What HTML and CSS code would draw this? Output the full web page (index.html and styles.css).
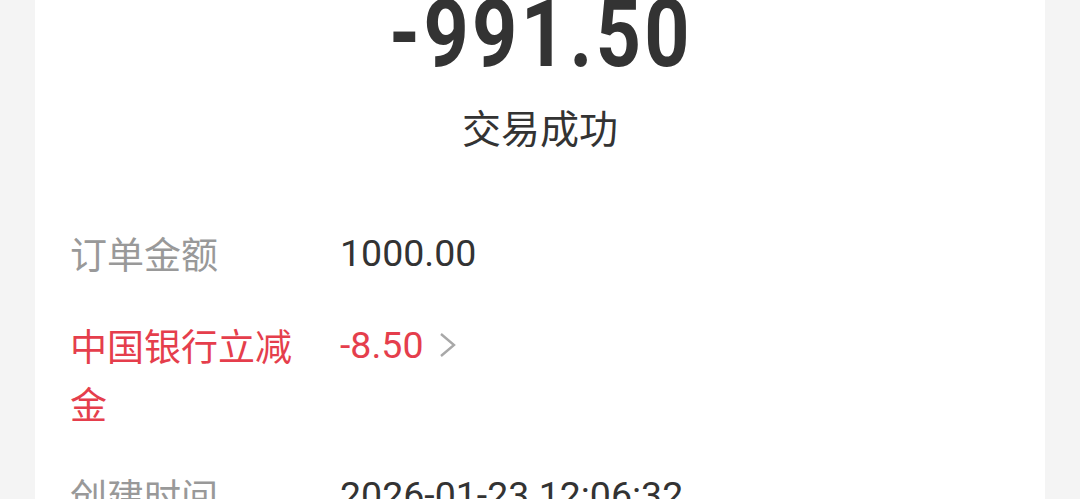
FILE: index.html
```html
<!DOCTYPE html>
<html lang="zh-CN">
<head>
    <meta charset="UTF-8">
    <meta name="viewport" content="width=device-width, initial-scale=1.0">
    <title>交易详情</title>
    <link rel="stylesheet" href="styles.css">
</head>
<body>

    <div class="card">
        <div class="summary">
            <div class="amount"><span>-991.50</span></div>
            <div class="status">交易成功</div>
        </div>

        <div class="details">
            <div class="label">订单金额</div>
            <div class="value">1000.00</div>

            <div class="label red">中国银行立减金</div>
            <div class="value red">
                -8.50
                <svg class="arrow" width="17" height="26" viewBox="0 0 17 26">
                    <polyline points="2,2 15,13 2,24" fill="none" stroke="#a8a8a8" stroke-width="2.4"/>
                </svg>
            </div>

            <div class="label">创建时间</div>
            <div class="value">2026-01-23 12:06:32</div>
        </div>
    </div>

</body>
</html>
```

FILE: styles.css
```css
body {
    margin: 0;
    padding: 0;
    background-color: #f4f4f4;
    font-family: Roboto, "Noto Sans CJK SC", sans-serif;
    overflow: hidden;
}

.card {
    margin: 0 35px;
    padding: 0 35px 40px;
    background-color: white;
    min-height: 600px;
}

.summary {
    text-align: center;
    color: #333;
}

.amount {
    margin-top: -13px;
    font-size: 94px;
    font-weight: 700;
    line-height: 1;
}

/* narrower digits, like the condensed face on the device */
.amount span {
    display: inline-block;
    letter-spacing: 4px;
    margin-right: -2px;
    transform: scaleX(0.84);
}

.status {
    margin-top: 17px;
    font-family: "Noto Sans CJK SC", sans-serif;
    font-size: 39px;
    line-height: 57px;
}

.details {
    display: grid;
    grid-template-columns: 230px 1fr;
    column-gap: 40px;
    row-gap: 34px;
    margin-top: 69px;
    line-height: 58px;
}

.label {
    font-family: "Noto Sans CJK SC", sans-serif;
    font-size: 37px;
    color: #999;
}

.value {
    font-size: 37.5px;
    color: #333;
    display: flex;
    align-items: center;
    height: 58px;
}

.red {
    color: #e53e4c;
}

.arrow {
    margin-left: 16px;
}
```
